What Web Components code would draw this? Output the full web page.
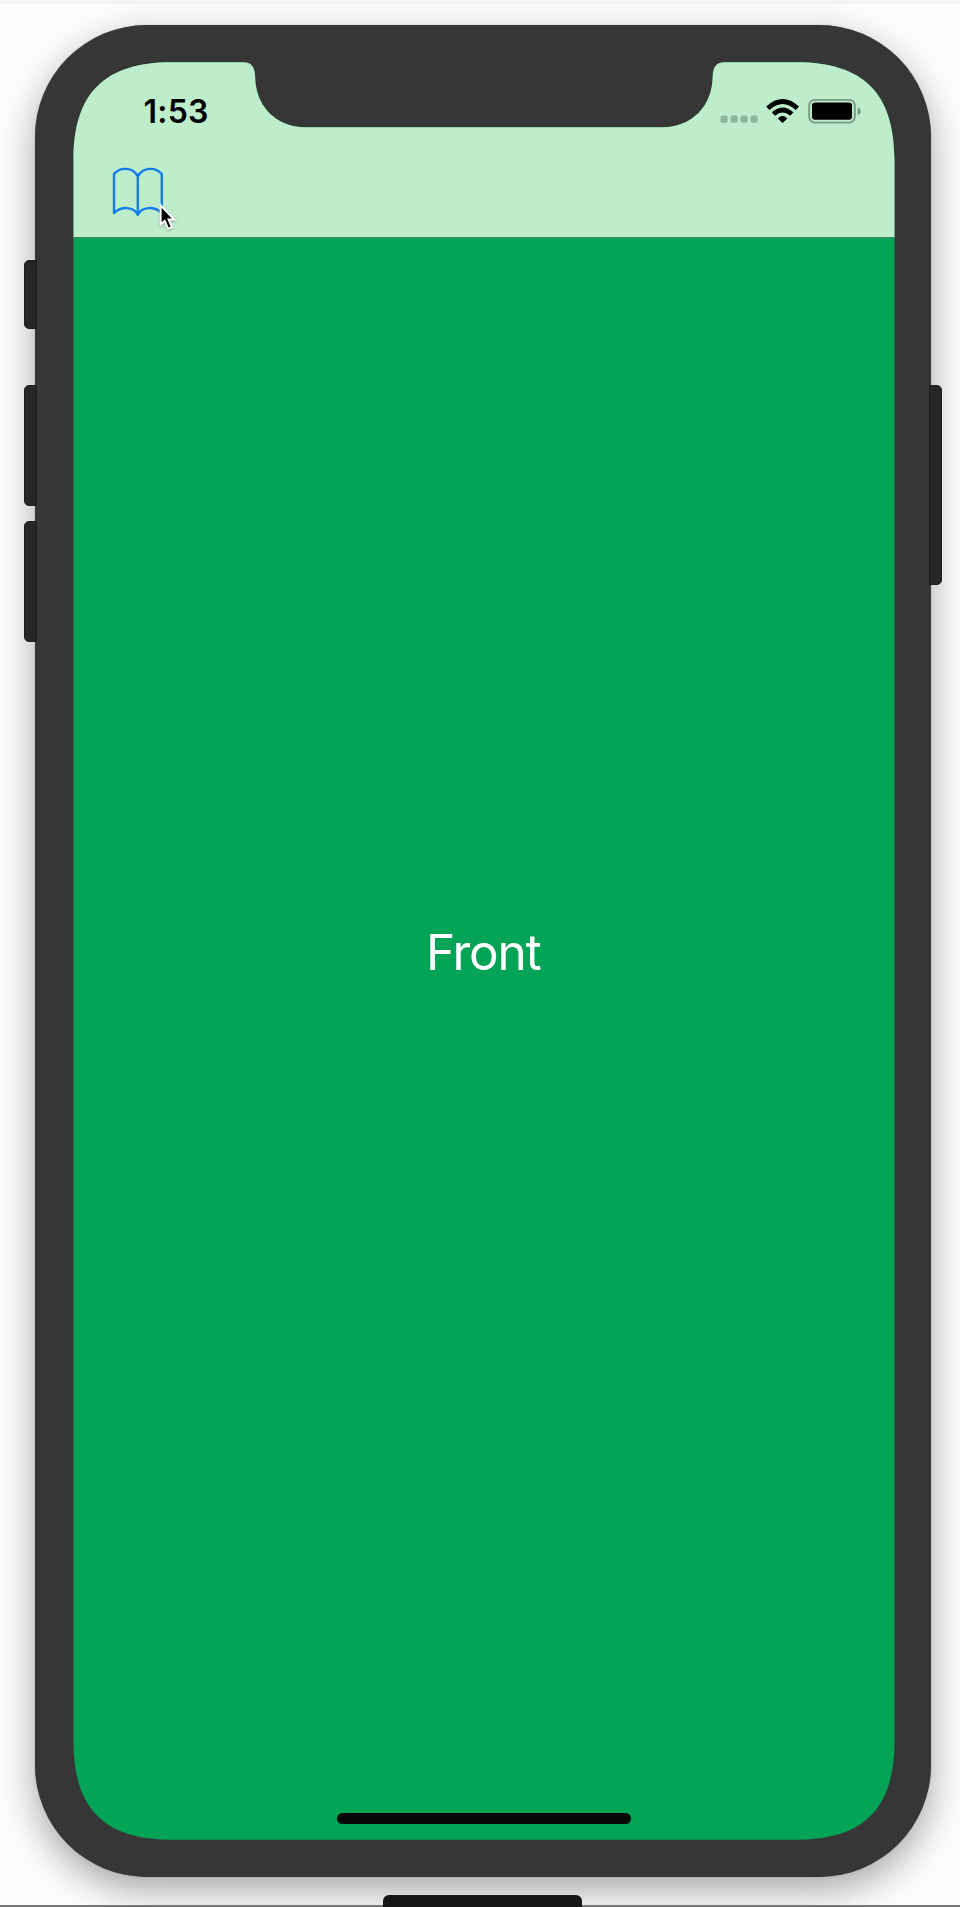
<!DOCTYPE html>
<html lang="en">
<head>
<meta charset="utf-8">
<title>Simulator</title>
<style>
html,body{margin:0;height:100%;background:#fcfcfc;overflow:hidden}
body{font-family:Inter,"Liberation Sans",sans-serif}
</style>
</head>
<body>
<simulator-window>
  <phone-device>
    <status-bar slot="screen" time="1:53"></status-bar>
    <nav-bar slot="screen"><book-icon></book-icon></nav-bar>
    <card-view slot="screen">Front</card-view>
  </phone-device>
</simulator-window>
<script>
class Base extends HTMLElement{
  connectedCallback(){
    if(this.shadowRoot)return;
    this.attachShadow({mode:'open'}).innerHTML=this.render();
  }
}
customElements.define('simulator-window',class extends Base{
  render(){return `<style>
  :host{display:flex;flex-direction:column;box-sizing:border-box;width:960px;height:1907px;overflow:hidden;background:#fcfcfc;position:relative}
  .strip{height:4px;flex:none;background:#f5f5f5}
  .stage{padding:21px 18px 0 24px;height:1870px;box-sizing:border-box;flex:none}
  .dock{height:12px;margin:21px 0 0 383px;width:199px;background:#161616;border-radius:6px 6px 0 0;flex:none;z-index:1}
  .edge{height:1.5px;margin-top:-2px;background:#777;flex:none}
  mouse-pointer{position:absolute;left:157px;top:202px}
  </style><div class="strip"></div><div class="stage"><slot></slot></div><div class="dock"></div><div class="edge"></div><mouse-pointer></mouse-pointer>`}
});
customElements.define('side-button',class extends Base{
  render(){return `<style>:host{display:block;box-sizing:border-box;background:#262626;border:1px solid #1d1d1d;border-radius:var(--r);height:var(--h);flex:none}</style>`}
});
customElements.define('phone-device',class extends Base{
  screenPath(){
    const L=.5,W=821.5,H=1777.5,E=98,c=31;
    return `M${L} ${E} C${L} ${c} ${L+c} 0 ${L+E} 0 H170.3 C179.3 0 181.8 6 182.1 14 C182.3 43 202.3 65 232.3 65 H589.5 C619.5 65 639.5 43 639.7 14 C640 6 642.5 0 651.5 0 H${W-E} C${W-c} 0 ${W} ${c} ${W} ${E} V${H-E} C${W} ${H-c} ${W-c} ${H} ${W-E} ${H} H${L+E} C${L+c} ${H} ${L} ${H-c} ${L} ${H-E}Z`;
  }
  render(){return `<style>
  :host{display:grid;grid-template-columns:11px 896px 11px;height:1852px}
  .body{box-sizing:border-box;height:1852px;padding:37.25px 36px 37.25px 38px;background:#363636;border-radius:112px;box-shadow:0 0 1px rgba(40,40,40,.6),0 13px 36px rgba(0,0,0,.34)}
  .screen{display:flex;flex-direction:column;width:822px;height:1777.5px;background:#03a455;clip-path:path('${this.screenPath()}')}
  .rail{display:flex;flex-direction:column;z-index:1}
  .left{width:13px;padding-top:235px;--r:5px 0 0 5px}
  .right{width:13px;margin-left:-2px;padding-top:360px;--r:0 5px 5px 0}
  .home{align-self:center;width:293.5px;height:10.5px;border-radius:6px;background:#080808;margin-bottom:16px;flex:none}
  </style>
  <div class="rail left"><side-button style="--h:69px"></side-button><side-button style="--h:121px;margin-top:56px"></side-button><side-button style="--h:121px;margin-top:15px"></side-button></div>
  <div class="body"><div class="screen"><slot name="screen"></slot><div class="home"></div></div></div>
  <div class="rail right"><side-button style="--h:200px"></side-button></div>`}
});
customElements.define('status-bar',class extends Base{
  render(){return `<style>
  :host{display:flex;flex:none;justify-content:space-between;height:96px;box-sizing:border-box;background:#bdedca;padding:30px 34px 0 70.5px;color:#000}
  .time{font-size:32px;font-weight:600;line-height:39px;letter-spacing:.2px}
  svg{display:block;margin-top:5px}
  </style><span class="time">${this.getAttribute('time')}</span>
  <svg width="142" height="27" viewBox="719 97 142 27">
    <g fill="#8fb59a"><rect x="720.5" y="115.5" width="7.2" height="7.2" rx="2"/><rect x="730.5" y="115.5" width="7.2" height="7.2" rx="2"/><rect x="740.5" y="115.5" width="7.2" height="7.2" rx="2"/><rect x="750.5" y="115.5" width="7.2" height="7.2" rx="2"/></g>
    <g fill="none" stroke="#000" stroke-width="4.8"><path d="M767.8 108.3Q782.6 94.8 797.4 108.3"/><path d="M773.4 114Q782.6 106 791.8 114"/></g>
    <path d="M777.8 118.4Q782.6 113.8 787.4 118.4L782.6 122.9Z"/>
    <rect x="809.2" y="99.8" width="45.6" height="22.8" rx="5.6" fill="none" stroke="#78967f" stroke-width="1.8"/>
    <rect x="812" y="102.6" width="40" height="17.2" rx="3"/>
    <path d="M857.6 107.5Q860.7 108.3 860.7 111.2Q860.7 114.2 857.6 115Z" fill="#78967f"/>
  </svg>`}
});
customElements.define('nav-bar',class extends Base{
  render(){return `<style>:host{display:block;flex:none;height:79.4px;box-sizing:border-box;background:#bdedca;border-bottom:1px solid #43875c;padding:8px 0 0 37px}</style><slot></slot>`}
});
customElements.define('book-icon',class extends Base{
  render(){return `<style>:host{display:block;width:54px;height:52px}svg{display:block}</style>
  <svg width="54" height="52" viewBox="110 166 54 52" fill="none" stroke="#127bf0" stroke-width="2.4" stroke-linejoin="round" stroke-linecap="round"><path d="M137.8 176.5C133 166.5 119.5 167 114 174V213C121.5 206 133.5 206.3 137.8 214.7C142 206.3 154 206 161.8 213V174C156 167 143 166.5 137.8 176.5V214.7"/></svg>`}
});
customElements.define('card-view',class extends Base{
  render(){return `<style>:host{display:flex;flex:1;align-items:center;justify-content:center;color:#fff;font-size:49.5px;line-height:60px;font-weight:400;letter-spacing:-1.2px;padding:0 1.5px 147px 0;box-sizing:border-box}</style><span><slot></slot></span>`}
});
customElements.define('mouse-pointer',class extends Base{
  render(){return `<style>:host{display:block;width:22px;height:32px;filter:drop-shadow(0 1px 1px rgba(0,0,0,.3))}svg{display:block}</style>
  <svg width="22" height="32" viewBox="157 202 22 32"><path d="M160.6 205.2V224.6L164.7 220.9L168.2 228.8L171.9 227.2L168.6 219.5H174.2Z" fill="#000" stroke="#fff" stroke-width="2" stroke-linejoin="miter"/></svg>`}
});
</script>
</body>
</html>
